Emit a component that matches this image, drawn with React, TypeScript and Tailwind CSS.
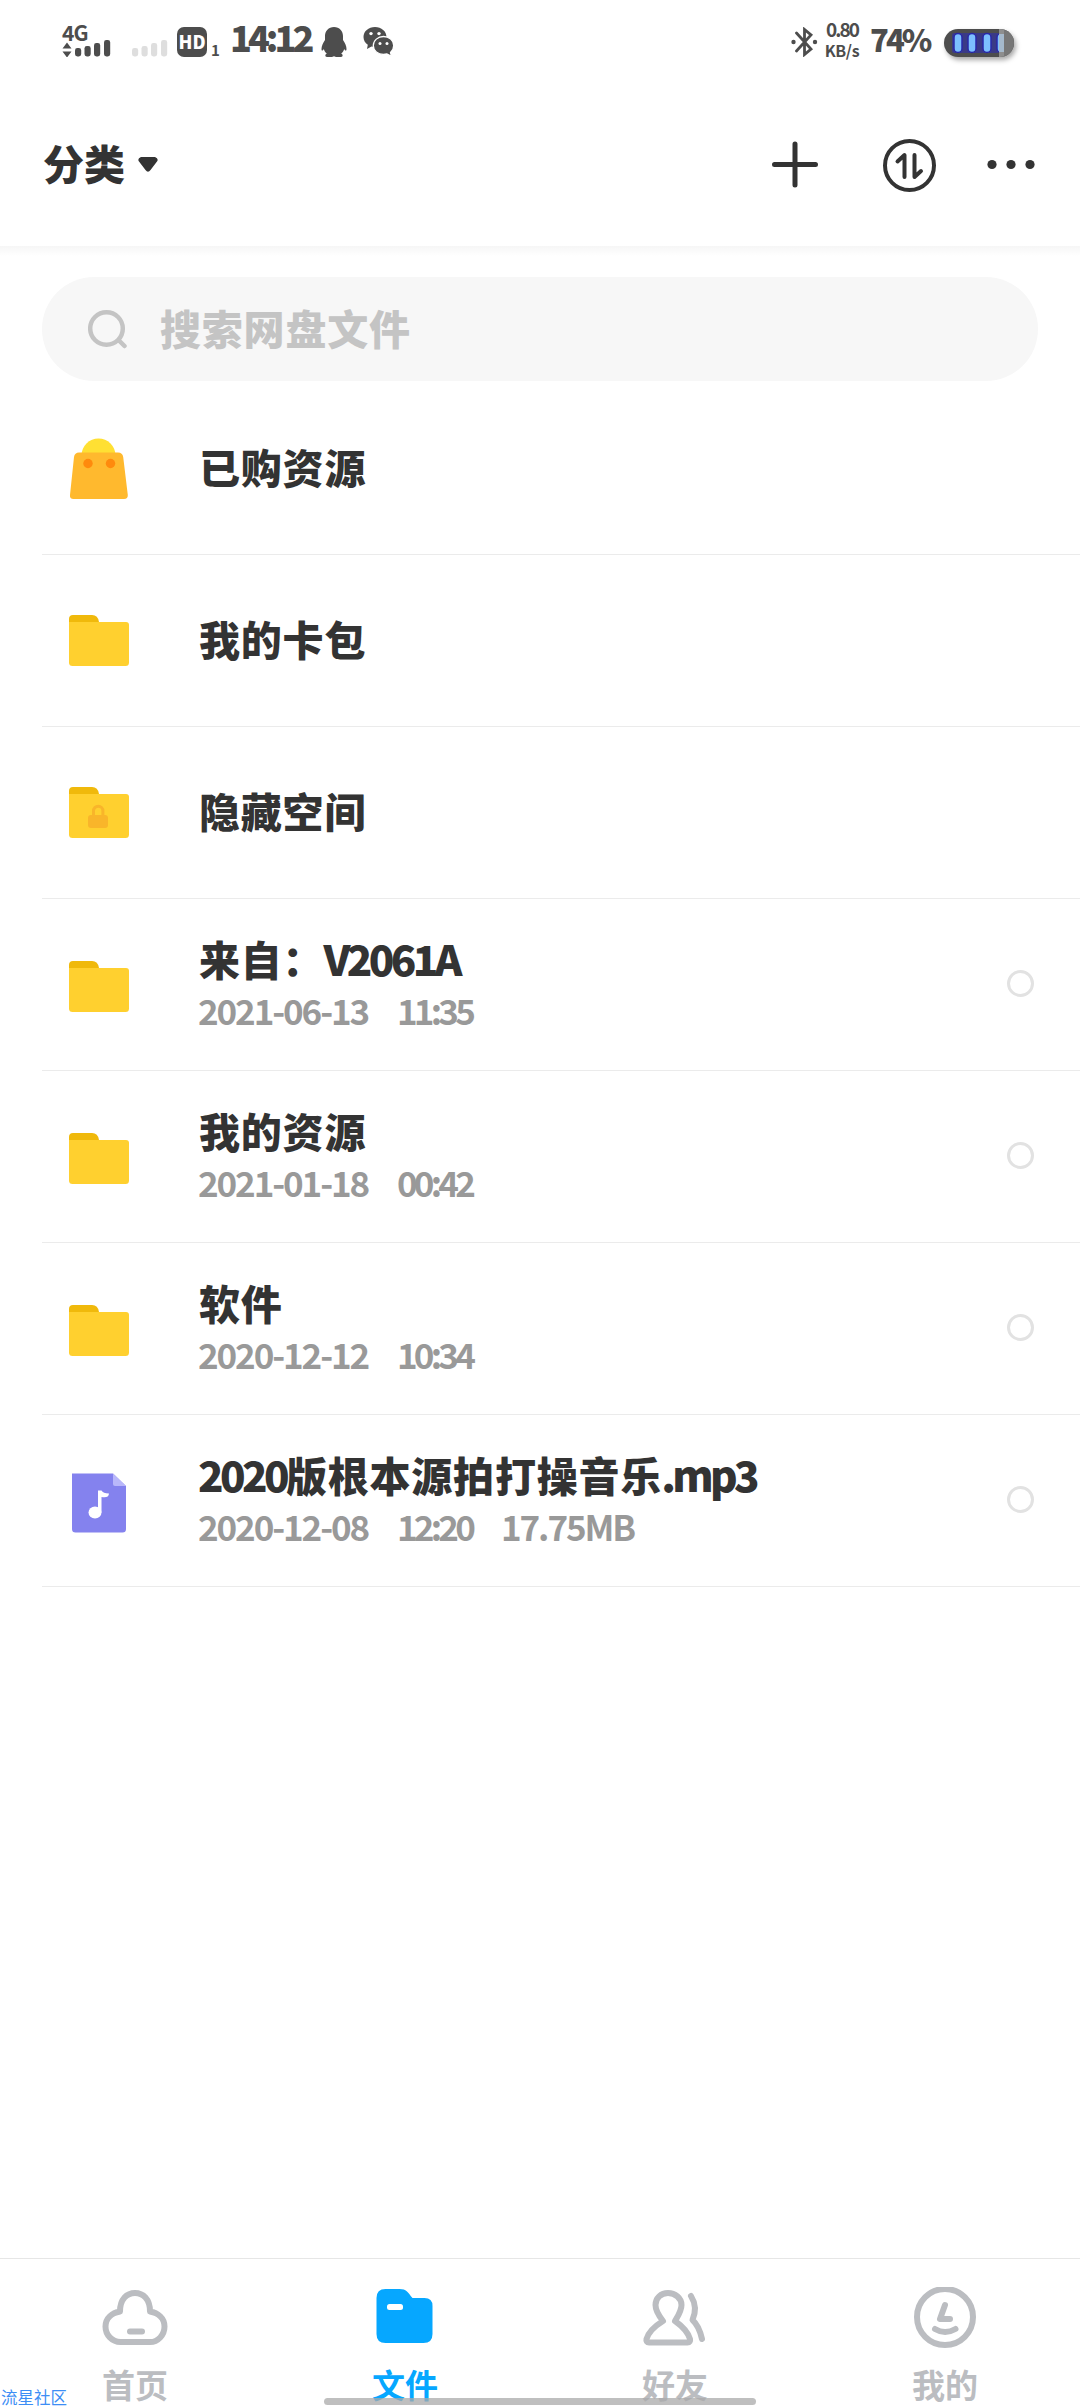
import clsx from "clsx";

type FileRow = {
  name: string;
  icon: "bag" | "folder" | "lock" | "music";
  date?: string;
  time?: string;
  size?: string;
};

const files: FileRow[] = [
  { name: "已购资源", icon: "bag" },
  { name: "我的卡包", icon: "folder" },
  { name: "隐藏空间", icon: "lock" },
  { name: "来自：V2061A", icon: "folder", date: "2021-06-13", time: "11:35" },
  { name: "我的资源", icon: "folder", date: "2021-01-18", time: "00:42" },
  { name: "软件", icon: "folder", date: "2020-12-12", time: "10:34" },
  {
    name: "2020版根本源拍打操音乐.mp3",
    icon: "music",
    date: "2020-12-08",
    time: "12:20",
    size: "17.75MB",
  },
];

const SignalBars = ({ className }: { className?: string }) => (
  <svg viewBox="0 0 36 17" className={clsx("w-[36px] h-[17px]", className)} fill="currentColor">
    <rect x="0" y="8" width="6.2" height="8.5" rx="2.4" />
    <rect x="9.5" y="6" width="6.2" height="10.5" rx="2.4" />
    <rect x="19" y="3" width="6.2" height="13.5" rx="2.4" />
    <rect x="29" y="0" width="6.2" height="16.5" rx="2.4" />
  </svg>
);

const StatusBar = () => (
  <div className="h-[80px] shrink-0 flex items-start text-[#4d4d4d] font-bold">
    <div className="ml-[62px] mt-[23px] w-[49px] flex flex-col">
      <span className="h-[17px] text-[21px] leading-[18px] tracking-[-1px]">4G</span>
      <div className="flex gap-[3px]">
        <svg viewBox="0 0 10 17" className="w-[10px] h-[17px]" fill="currentColor">
          <path d="M5 2.5 9.5 8.5H.5zM5 17.5 .5 11.5H9.5z" />
        </svg>
        <SignalBars />
      </div>
    </div>
    <SignalBars className="ml-[21px] mt-[40px] text-[#dedede]" />
    <div className="ml-[9px] mt-[27px] w-[30px] h-[30px] rounded-[7px] bg-[#4d4d4d] text-white text-[18px] leading-[28px] font-black text-center">
      HD
    </div>
    <span className="ml-[4px] mt-[41px] w-[11px] text-[15px] leading-[18px]">1</span>
    <span className="ml-[8px] mt-[15px] w-[82px] text-[36px] leading-[42px] tracking-[-4px] font-black">14:12</span>
    {/* penguin */}
    <svg viewBox="0 0 26 30" className="ml-[9px] mt-[27px] w-[26px] h-[30px]" fill="currentColor">
      <path d="M13 0C7.500 0 4 4 4 9v4C2 16 .5 19 .5 22c0 2 1.200 2 2.300 0 .6 2 1.700 3.600 3 4.600C4 27.400 3.700 30 6 30h4c1.500 0 2-.8 3-.8s1.500.8 3 .8h4c2.300 0 2-2.600.2-3.400 1.300-1 2.400-2.600 3-4.600 1.100 2 2.300 2 2.300 0 0-3-1.500-6-3.500-9V9c0-5-3.500-9-9-9z" />
    </svg>
    {/* chat bubbles */}
    <svg viewBox="0 0 31 31" className="ml-[16px] mt-[26px] w-[31px] h-[31px]">
      <path
        fill="currentColor"
        d="M12 1C5.500 1 .5 5.400.5 11c0 3.200 1.600 6 4.300 7.800L4 23l4.500-2.400c1.100.3 2.300.4 3.500.4 6.400 0 11.500-4.400 11.500-10S18.400 1 12 1z"
      />
      <circle cx="8" cy="7.600" r="1.700" fill="#fff" />
      <circle cx="16" cy="7.600" r="1.700" fill="#fff" />
      <path
        fill="currentColor"
        stroke="#fff"
        strokeWidth="1.300"
        d="M20.500 10.500c-5.600 0-10.200 4-10.200 9s4.600 9 10.200 9c1.200 0 2.300-.2 3.400-.5l4.600 2.400-1-3.800c2-1.700 3.200-4.300 3.200-7.100 0-5-4.600-9-10.200-9z"
      />
      <circle cx="17" cy="17.500" r="1.500" fill="#fff" />
      <circle cx="24" cy="17.500" r="1.500" fill="#fff" />
    </svg>

    <div className="ml-auto mr-[66px] flex items-start">
      <svg viewBox="0 0 27 30" className="mt-[27px] w-[27px] h-[30px]">
        <path
          d="M5.500 6 20 22 13.500 27.500V2.500L20 8 5.500 24"
          fill="none"
          stroke="currentColor"
          strokeWidth="2.800"
          strokeLinecap="round"
        />
        <circle cx="2.500" cy="15" r="2.200" fill="currentColor" />
        <circle cx="24" cy="15" r="2.200" fill="currentColor" />
      </svg>
      <div className="ml-[5px] mt-[20px] w-[38px] flex flex-col items-center whitespace-nowrap">
        <span className="text-[19px] leading-[18px] tracking-[-2px]">0.80</span>
        <span className="mt-[1px] text-[16px] leading-[22px] tracking-[-0.4px]">KB/s</span>
      </div>
      <span className="ml-[9px] mt-[20px] w-[60px] text-[31px] leading-[38px] tracking-[-3px] font-black">74%</span>
      <div className="ml-[14px] mt-[29px] w-[70px] h-[28px] rounded-full overflow-hidden bg-[#4d4d4d] shadow-[2px_3px_5px_rgba(0,0,0,0.35)]">
        <svg viewBox="0 0 70 28" className="w-[70px] h-[28px]">
          <rect x="8" y="4" width="47" height="20" rx="2" fill="#3a3a86" />
          <g fill="#7cc0ff" stroke="#2828a8" strokeWidth="1.500">
            <rect x="10" y="4.500" width="8" height="19" rx="4" />
            <rect x="24" y="4.500" width="8" height="19" rx="4" />
            <rect x="39" y="4.500" width="8" height="19" rx="4" />
            <rect x="53" y="4.500" width="8" height="19" rx="4" />
          </g>
          <rect x="55" width="5" height="28" fill="#8e8e8e" />
          <rect x="55" y="5" width="5" height="18" fill="#a5b9cc" />
          <rect x="60" width="10" height="28" fill="#777" />
        </svg>
      </div>
    </div>
  </div>
);

const Header = () => (
  <div className="h-[166px] shrink-0 flex items-start text-[#333]">
    <span className="ml-[43px] mt-[56px] text-[41px] leading-[52px] font-black">分类</span>
    <svg viewBox="0 0 20 16" className="ml-[13px] mt-[77px] w-[20px] h-[16px]" fill="currentColor">
      <path d="M3 0H17Q21 1.500 19 4.500L12.500 13Q10 16.500 7.500 13L1 4.500Q-1 1.500 3 0z" />
    </svg>
    <div className="ml-auto mr-[45px] mt-[58px] flex items-center">
      <svg viewBox="0 0 46 54" className="w-[46px] h-[54px]" stroke="currentColor" strokeWidth="5" strokeLinecap="round">
        <path d="M2.500 26.500H43.500M23 6V47" />
      </svg>
      <svg
        viewBox="0 0 54 54"
        className="ml-[64px] w-[54px] h-[54px]"
        fill="none"
        stroke="currentColor"
        strokeWidth="4"
        strokeLinecap="round"
        strokeLinejoin="round"
      >
        <circle cx="27.500" cy="27.500" r="24.500" />
        <path d="M15.500 23.500 22.500 17V39M32.500 17V39L39 33" />
      </svg>
      <svg viewBox="0 0 48 54" className="ml-[51px] w-[48px] h-[54px]" fill="currentColor">
        <circle cx="5" cy="26.500" r="4.600" />
        <circle cx="24" cy="26.500" r="4.600" />
        <circle cx="43" cy="26.500" r="4.600" />
      </svg>
    </div>
  </div>
);

const SearchBox = () => (
  <div className="mx-[42px] mt-[21px] h-[104px] shrink-0 rounded-full bg-[#f7f7f7] flex items-center text-[#c4c4c4]">
    <svg
      viewBox="0 0 40 40"
      className="ml-[46px] w-[40px] h-[40px]"
      fill="none"
      stroke="currentColor"
      strokeWidth="4.500"
      strokeLinecap="round"
    >
      <circle cx="18.500" cy="19.500" r="16.300" />
      <path d="M31 31.500 36.500 37" />
    </svg>
    <span className="ml-[32px] -mt-[4px] text-[41px] tracking-[0.8px] leading-[52px] font-black">搜索网盘文件</span>
  </div>
);

const FileIcon = ({ icon }: { icon: FileRow["icon"] }) => {
  if (icon === "bag") {
    return (
      <svg viewBox="0 0 60 62" className="w-[60px] h-[62px]">
        <circle cx="29.500" cy="17.500" r="17" fill="#ffe033" />
        <path
          d="M10 14.500H49Q53.500 14.500 54.200 19L58.800 57Q59 61 55 61H4.500Q.5 61 1 57L5 19Q5.700 14.500 10 14.500z"
          fill="#ffb92e"
        />
        <circle cx="19" cy="25.500" r="4.700" fill="#ff8a0d" />
        <circle cx="41.500" cy="25.500" r="4.700" fill="#ff8a0d" />
      </svg>
    );
  }
  if (icon === "music") {
    return (
      <svg viewBox="0 0 60 60" className="w-[60px] h-[60px]">
        <path d="M3 .5H44L57 13V56Q57 59.500 53.500 59.500H6.500Q3 59.500 3 56z" fill="#8482ee" />
        <path d="M44 .5 57 13H46Q44 13 44 11z" fill="#b9b7fa" />
        <ellipse cx="26" cy="39.500" rx="6.500" ry="6" fill="#fff" />
        <path d="M29 17.500H32.500Q34 20.500 40 20.500Q39.500 25.500 32.500 24V39.500H29z" fill="#fff" />
      </svg>
    );
  }
  return (
    <svg viewBox="0 0 60 51" className="w-[60px] h-[51px]">
      <path d="M0 12V4Q0 0 4 0H23Q29 0 30 7V12z" fill="#f0b90b" />
      <path d="M0 7H57Q60 7 60 10V47.500Q60 51 56.500 51H3.500Q0 51 0 47.500z" fill="#ffd02f" />
      {icon === "lock" && (
        <>
          <path d="M24.500 29V24a4.700 4.700 0 0 1 9.400 0V29" fill="none" stroke="#f9b52a" strokeWidth="3" />
          <rect x="19" y="28" width="20" height="13" rx="3" fill="#f9b52a" />
        </>
      )}
    </svg>
  );
};

// latin runs are set tighter than the chinese ones
const FileName = ({ name }: { name: string }) => (
  <div className="text-[#333] font-black text-[41px] leading-[52px] tracking-[0.8px] whitespace-nowrap flex">
    {name.split(/([\x20-\x7e]+)/).filter(Boolean).map((part) => (
      <span key={part} className={clsx(/^[\x20-\x7e]/.test(part) && "-ml-[1px] text-[42px] tracking-[-3.6px]")}>
        {part}
      </span>
    ))}
  </div>
);

const FileItem = ({ file }: { file: FileRow }) => (
  <div className="ml-[42px] h-[172px] shrink-0 border-b border-[#ebebeb] flex items-center">
    <div className={clsx("ml-[27px] w-[60px] flex justify-center", file.date ? "mt-[4px]" : "mt-0")}>
      <FileIcon icon={file.icon} />
    </div>
    <div className={clsx("ml-[70px] flex-1", file.date ? "-mt-[1px]" : "-mt-[6px]")}>
      <FileName name={file.name} />
      {file.date && (
        <div className="flex text-[#999] text-[35px] leading-[52px] font-bold tracking-[-2.100px] whitespace-nowrap">
          <span className="-ml-[1px] w-[199px]">{file.date}</span>
          <span className="w-[104px] tracking-[-3.800px]">{file.time}</span>
          <span>{file.size}</span>
        </div>
      )}
    </div>
    {file.date && <div className="mr-[46px] mb-[3px] w-[27px] h-[27px] rounded-full border-[3px] border-[#e2e2e2]" />}
  </div>
);

const tabs = [
  {
    label: "首页",
    icon: (
      <path
        d="M19 24.500C19 12 26 6 34 6s15 6 15 18.500C57 26 63.500 31 63.500 39.500S57 55 49 55H19.500C11 55 4.500 48 4.500 39.500S11 26 19 24.500zM29 44.500H41"
        fill="none"
      />
    ),
  },
  {
    label: "文件",
    active: true,
    icon: (
      <g transform="translate(-2.500 0)" stroke="none">
        <path
          d="M17 2H31C38 2 39 5 44 11H56Q64 11 64 19V47Q64 56 55 56H17Q8 56 8 47V11Q8 2 17 2z"
          fill="currentColor"
        />
        <rect x="18.500" y="17" width="16" height="6" rx="2.500" fill="#fff" />
      </g>
    ),
  },
  {
    label: "好友",
    icon: (
      <g fill="none">
        <path d="M22 34C18 29 14.500 24 14.500 18 14.500 11 20 6 27 6s13.500 5 13.500 12c0 6-3.500 11-6.500 16 7 5 13 11 15 18 .5 2-.5 3.500-2.500 3.500H8C6 55.500 5 54 5.500 52 7.500 45 14 39 22 34z" />
        <path d="M50 9C55 17 55 25 51.500 33 56 37 59 43 61 52" />
      </g>
    ),
  },
  {
    label: "我的",
    icon: (
      <g fill="none">
        <circle cx="34" cy="30" r="28" />
        <path d="M34 18 29 32H39M24 42Q34 48 44.500 42" />
      </g>
    ),
  },
];

const BottomNav = () => (
  <div className="mt-auto h-[150px] shrink-0 border-t border-[#e6e6e6] grid grid-cols-4">
    {tabs.map((tab) => (
      <div
        key={tab.label}
        className={clsx("flex flex-col items-center", tab.active ? "text-[#06a7ff]" : "text-[#bbbdc1]")}
      >
        <svg
          viewBox="0 0 68 62"
          className="mt-[28px] w-[68px] h-[62px]"
          stroke="currentColor"
          strokeWidth="6"
          strokeLinecap="round"
          strokeLinejoin="round"
        >
          {tab.icon}
        </svg>
        <span className="mt-[15px] text-[33px] leading-[40px] font-bold">{tab.label}</span>
      </div>
    ))}
  </div>
);

const App = () => {
  return (
    <div className="relative w-[1080px] h-[2408px] overflow-hidden bg-white flex flex-col font-['Noto_Sans_CJK_SC',sans-serif]">
      <StatusBar />
      <Header />
      <div className="h-[10px] shrink-0 bg-linear-to-b from-[#f6f6f6] to-white" />
      <SearchBox />
      <div className="mt-[2px] flex flex-col">
        {files.map((file) => (
          <FileItem key={file.name} file={file} />
        ))}
      </div>
      <BottomNav />
      <div className="absolute left-[324px] bottom-[3px] w-[432px] h-[7px] rounded-full bg-[#aaa]/75" />
      <span className="absolute left-[1px] bottom-0 text-[16.500px] leading-[22px] text-[#3d8ef5]">流星社区</span>
    </div>
  );
};

export default App;
